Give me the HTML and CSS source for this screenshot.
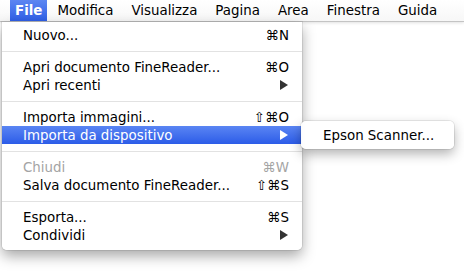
FILE: index.html
```html
<!DOCTYPE html>
<html lang="it">
<head>
  <meta charset="UTF-8" />
  <title>File menu</title>
  <link rel="stylesheet" href="styles.css">
</head>
<body>

  <div class="menubar">
    <div class="menubar-item active">File</div>
    <div class="menubar-item">Modifica</div>
    <div class="menubar-item">Visualizza</div>
    <div class="menubar-item">Pagina</div>
    <div class="menubar-item">Area</div>
    <div class="menubar-item">Finestra</div>
    <div class="menubar-item">Guida</div>
  </div>

  <div class="menu">
    <div class="item"><span>Nuovo...</span><span class="key">⌘N</span></div>
    <div class="sep"></div>
    <div class="item"><span>Apri documento FineReader...</span><span class="key">⌘O</span></div>
    <div class="item"><span>Apri recenti</span><svg class="arrow" width="8" height="10" viewBox="0 0 8 10"><path d="M0 0 L8 5 L0 10 Z"/></svg></div>
    <div class="sep"></div>
    <div class="item"><span>Importa immagini...</span><span class="key">⇧⌘O</span></div>
    <div class="item selected"><span>Importa da dispositivo</span><svg class="arrow" width="8" height="10" viewBox="0 0 8 10"><path d="M0 0 L8 5 L0 10 Z"/></svg></div>
    <div class="sep"></div>
    <div class="item disabled"><span>Chiudi</span><span class="key">⌘W</span></div>
    <div class="item"><span>Salva documento FineReader...</span><span class="key">⇧⌘S</span></div>
    <div class="sep"></div>
    <div class="item"><span>Esporta...</span><span class="key">⌘S</span></div>
    <div class="item"><span>Condividi</span><svg class="arrow" width="8" height="10" viewBox="0 0 8 10"><path d="M0 0 L8 5 L0 10 Z"/></svg></div>
  </div>

  <div class="submenu">
    <div class="item"><span>Epson Scanner...</span></div>
  </div>

</body>
</html>
```

FILE: styles.css
```css
* { box-sizing: border-box; }

body {
  margin: 0;
  width: 464px;
  height: 273px;
  background: #fff;
  font-family: "DejaVu Sans", sans-serif;
  font-size: 13px;
  color: #000;
  position: relative;
  overflow: hidden;
}

.menubar {
  display: flex;
  height: 22px;
  padding-left: 10px;
  background: linear-gradient(#ffffff, #f7f7f7);
  border-bottom: 1px solid #c4c4c4;
  box-shadow: 0 1px 3px rgba(0, 0, 0, 0.12);
}

.menubar-item {
  padding: 0 9px;
  line-height: 21px;
  font-size: 13.4px;
}

.menubar-item.active {
  font-weight: bold;
  color: #fff;
  padding: 0 5px;
  margin-right: 1px;
  background: linear-gradient(#5c86f2, #2f5fe6);
}

.menu {
  position: absolute;
  top: 22px;
  left: 2px;
  width: 300px;
  padding: 4px 0 6px;
  background: rgba(255, 255, 255, 0.97);
  border-radius: 0 0 5px 5px;
  box-shadow: 0 6px 14px rgba(0, 0, 0, 0.35), 0 0 0 1px rgba(0, 0, 0, 0.08);
}

.item {
  display: flex;
  justify-content: space-between;
  align-items: center;
  height: 18px;
  padding: 0 13px 0 21px;
  font-size: 13.4px;
}

.arrow {
  fill: #333;
  margin-right: 1px;
}

.item.selected {
  color: #fff;
  background: linear-gradient(#5a85f3, #2c5ce8);
}

.item.selected .arrow {
  fill: #fff;
}

.item.disabled {
  color: #a4a4a4;
}

.sep {
  height: 1px;
  margin: 7px 0 6px;
  background: #e2e2e2;
}

.submenu {
  position: absolute;
  top: 121px;
  left: 301px;
  width: 153px;
  padding: 5px 0;
  background: rgba(255, 255, 255, 0.97);
  border-radius: 5px;
  box-shadow: 0 5px 12px rgba(0, 0, 0, 0.3), 0 0 0 1px rgba(0, 0, 0, 0.08);
}

.submenu .item {
  padding-left: 22px;
}
```
